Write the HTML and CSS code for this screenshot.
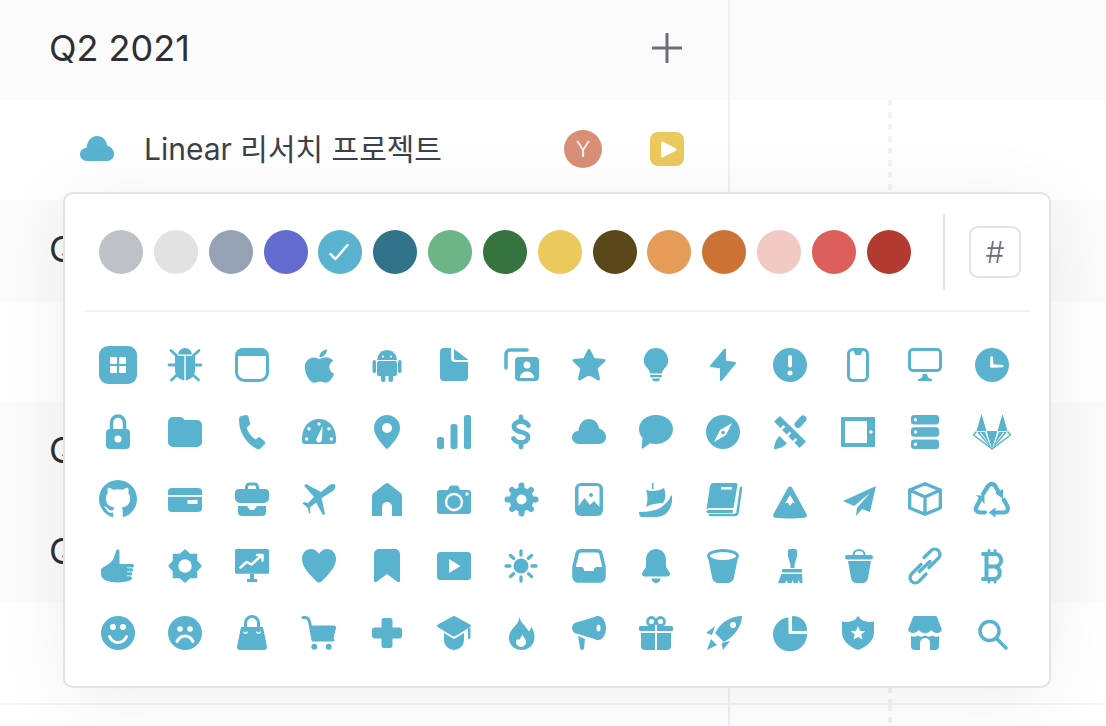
FILE: index.html
```html
<!DOCTYPE html>
<html lang="ko">
<head>
    <meta charset="UTF-8">
    <meta name="viewport" content="width=device-width, initial-scale=1.0">
    <title>Linear</title>
    <link rel="stylesheet" href="styles.css">
</head>
<body>
    <div class="board">
        <div class="band">
            <div class="band-main"><h2 class="quarter">Q2 2021</h2>
                <svg class="add" viewBox="0 0 30 30"><path d="M15 1v28M1 15h28"/></svg>
            </div>
            <div class="band-side"></div>
        </div>
        <div class="project">
            <div class="project-main">
                <svg class="ic" viewBox="0 0 34 34"><path d="M7 29C3 29 0 26 0 22.5 0 18.5 3 16 6.5 16 7 9 11 4 17 4c5.500 0 9.500 4 10 9.500 4 1 7 4.500 7 8.500 0 4-3 7-7 7z"/></svg>
                <span class="project-name">Linear 리서치 프로젝트</span>
                <span class="avatar">Y</span>
                <span class="status"><svg viewBox="0 0 34 34"><path d="M12.500 11 25 17.500 12.500 24z"/></svg></span>
            </div>
            <div class="project-side"><div class="today"></div></div>
        </div>
        <div class="band band-wide">
            <div class="band-main"><h2 class="quarter">Q3 2021</h2></div>
            <div class="band-side"></div>
        </div>
        <div class="project">
            <div class="project-main"></div>
            <div class="project-side"><div class="today"></div></div>
        </div>
        <div class="band">
            <div class="band-main"><h2 class="quarter">Q4 2021</h2></div>
            <div class="band-side"></div>
        </div>
        <div class="band band-tall">
            <div class="band-main"><h2 class="quarter">Q1 2022</h2></div>
            <div class="band-side"></div>
        </div>
        <div class="project project-ruled">
            <div class="project-main"></div>
            <div class="project-side"><div class="today"></div></div>
        </div>
        <div class="project project-last">
            <div class="project-main"></div>
            <div class="project-side"><div class="today"></div></div>
        </div>
    </div>

    <div class="picker">
        <div class="picker-head">
            <div class="swatches">
                <span class="swatch c1"></span>
                <span class="swatch c2"></span>
                <span class="swatch c3"></span>
                <span class="swatch c4"></span>
                <span class="swatch c5"><svg viewBox="0 0 44 44"><path d="M12.500 24l5 5 12-14"/></svg></span>
                <span class="swatch c6"></span>
                <span class="swatch c7"></span>
                <span class="swatch c8"></span>
                <span class="swatch c9"></span>
                <span class="swatch c10"></span>
                <span class="swatch c11"></span>
                <span class="swatch c12"></span>
                <span class="swatch c13"></span>
                <span class="swatch c14"></span>
                <span class="swatch c15"></span>
            </div>
            <div class="picker-sep"></div>
            <button class="hash">#</button>
        </div>
        <div class="icons">
            <!-- row 1 -->
            <svg class="ic ic-lg" viewBox="0 0 38 38"><rect width="38" height="38" rx="9"/><rect class="w" x="11" y="11" width="7" height="7" rx="1"/><rect class="w" x="20" y="11" width="7" height="7" rx="1"/><rect class="w" x="11" y="20" width="7" height="7" rx="1"/><rect class="w" x="20" y="20" width="7" height="7" rx="1"/></svg>
            <svg class="ic" viewBox="0 0 34 34"><path d="M10 6.500a7 6.500 0 0 1 14 0z"/><path d="M7 8H16.300V32.500C11 31.500 7 28 7 22zM27 8H17.700V32.500C23 31.500 27 28 27 22z"/><path class="s" stroke-width="2.800" d="M3 2.500l6 5.500M31 2.500l-6 5.500M1 17h8M33 17h-8M3.500 32l6-5.500M30.500 32l-6-5.500"/></svg>
            <svg class="ic" viewBox="0 0 34 34"><rect class="s" stroke-width="3" x="1.500" y="1.500" width="31" height="31" rx="8"/><path d="M8 0h18a8 8 0 0 1 8 8H0a8 8 0 0 1 8-8z"/></svg>
            <svg class="ic" viewBox="0 0 34 34"><g transform="translate(2.500 -1) scale(.078 .0745)"><path d="M318.700 268.700c-.2-36.700 16.400-64.400 50-84.800-18.800-26.900-47.200-41.700-84.700-44.600-35.500-2.800-74.300 20.700-88.500 20.700-15 0-49.400-19.700-76.400-19.700C63.300 141.200 4 184.800 4 273.500q0 39.300 14.400 81.200c12.800 36.700 59 126.700 107.200 125.200 25.200-.6 43-17.900 75.800-17.900 31.800 0 48.300 17.900 76.400 17.900 48.600-.7 90.400-82.500 102.600-119.300-65.200-30.700-61.700-90-61.700-91.900zm-56.600-164.200c27.300-32.400 24.800-61.900 24-72.500-24.100 1.400-52 16.400-67.900 34.900-17.500 19.800-27.800 44.300-25.600 71.900 26.100 2 49.900-11.400 69.500-34.300z"/></g></svg>
            <svg class="ic" viewBox="0 0 34 34"><path d="M7 12a10 10 0 0 1 20 0z"/><rect x="7" y="13" width="20" height="15" rx="2"/><rect x="2.500" y="12" width="3.500" height="13" rx="1.700"/><rect x="28" y="12" width="3.500" height="13" rx="1.700"/><rect x="11" y="26" width="4.500" height="8" rx="2"/><rect x="18.500" y="26" width="4.500" height="8" rx="2"/><path class="s" stroke-width="1" d="M11 3.500l1.500 3M23 3.500l-1.500 3"/><circle class="w" cx="13" cy="8.500" r="1"/><circle class="w" cx="21" cy="8.500" r="1"/></svg>
            <svg class="ic" viewBox="0 0 34 34"><path d="M7 0h7v10a4 4 0 0 0 4 4h13v15a4 4 0 0 1-4 4H7a4 4 0 0 1-4-4V4a4 4 0 0 1 4-4z"/><path d="M17 1l14 10.500V12H19a2 2 0 0 1-2-2z"/></svg>
            <svg class="ic" viewBox="0 0 34 34"><path class="s" stroke-width="3.500" d="M23 2H6a4 4 0 0 0-4 4v14"/><rect x="11" y="9" width="24" height="24" rx="4"/><circle class="w" cx="23" cy="17" r="3.500"/><path class="w" d="M16 30c0-4 3-6.500 7-6.500s7 2.500 7 6.500z"/></svg>
            <svg class="ic" viewBox="0 0 34 34"><path class="st" stroke-width="3" d="M17 2.500l4.500 9 10.500 1-8 7.500 2.500 11-9.500-5.500-9.500 5.500 2.500-11-8-7.500 10.500-1z"/></svg>
            <svg class="ic" viewBox="0 0 34 34"><path d="M17 0a12 12 0 0 1 8 21c-1.500 1.500-2 3-2 4.500H11c0-1.500-.5-3-2-4.500A12 12 0 0 1 17 0z"/><rect x="11" y="27" width="12" height="2.300" rx="1"/><path d="M13 30.500h8a4 3 0 0 1-8 0z"/></svg>
            <svg class="ic" viewBox="0 0 34 34"><path class="st" stroke-width="2" d="M19 1.500 5 18l10 1.500V32l14-17-10-1.500z"/></svg>
            <svg class="ic" viewBox="0 0 34 34"><circle cx="17" cy="17" r="17"/><rect class="w" x="15" y="7" width="4" height="12.500" rx="2"/><circle class="w" cx="17" cy="25" r="2.500"/></svg>
            <svg class="ic" viewBox="0 0 34 34"><rect class="s" stroke-width="3" x="7.500" y="1.500" width="19" height="31" rx="4.500"/><path d="M12.500 2h9l-1 3.500a2 2 0 0 1-2 1.500h-3a2 2 0 0 1-2-1.500z"/></svg>
            <svg class="ic" viewBox="0 0 34 34"><rect class="s" stroke-width="3" x="1.500" y="1.500" width="31" height="21" rx="3.500"/><path d="M15 26h4l1 3.500 4 2V33H10v-1.500l4-2z"/></svg>
            <svg class="ic" viewBox="0 0 34 34"><circle cx="17" cy="17" r="17"/><path class="w" d="M15.300 9.500a1.300 1.300 0 0 1 2.600 0l.6 6.700 9 .8a1.100 1.100 0 0 1 0 2.200l-10.700.6a1.700 1.700 0 0 1-1.800-1.800z"/></svg>

            <!-- row 2 -->
            <svg class="ic" viewBox="0 0 34 34"><path class="s" stroke-width="3.500" d="M10.500 15V7.500a6.500 6.500 0 0 1 13 0V15"/><rect x="5" y="14" width="24" height="20" rx="4"/><circle class="w" cx="17" cy="24" r="3.500"/></svg>
            <svg class="ic" viewBox="0 0 34 34"><path d="M5 2h7c2.500 0 3.500 1.500 4.500 3H29a5 5 0 0 1 5 5v17a5 5 0 0 1-5 5H5a5 5 0 0 1-5-5V7a5 5 0 0 1 5-5z"/></svg>
            <svg class="ic" viewBox="0 0 34 34"><path d="M6 1l5-1c1.500 0 2 .8 2.500 2L15 8c.3 1.400-.3 2-1.500 3l-2 1.500c1.500 5 4.500 9 9 12l2-1.500c1-.8 2-1 3-.2l4 3.500c1 1 1 2 .2 3L26 33c-1.500 1.500-3 1.500-5 .5C11 28 4 17 4 5c0-2 .5-3.500 2-4z"/></svg>
            <svg class="ic" viewBox="0 0 34 34"><path d="M17 4C7 4 0 12 0 24v2a3 3 0 0 0 3 3h28a3 3 0 0 0 3-3v-2C34 12 27 4 17 4z"/><circle class="w" cx="4.700" cy="24" r="1.700"/><circle class="w" cx="7" cy="13.700" r="1.700"/><circle class="w" cx="17" cy="9" r="1.700"/><circle class="w" cx="27" cy="13.700" r="1.700"/><circle class="w" cx="29.300" cy="24" r="1.700"/><path class="w" d="M20.700 11l-.8 14.500a3 3 0 0 1-5.800-1z"/></svg>
            <svg class="ic" viewBox="0 0 34 34"><path d="M17 0a13 13 0 0 1 13 13c0 8-8 16-11.500 20a2 2 0 0 1-3 0C12 29 4 21 4 13A13 13 0 0 1 17 0z"/><circle class="w" cx="17" cy="13" r="5"/></svg>
            <svg class="ic" viewBox="0 0 34 34"><rect y="22" width="7" height="12" rx="2.500"/><rect x="13.500" y="9" width="7" height="25" rx="2.500"/><rect x="27" width="7" height="34" rx="2.500"/></svg>
            <svg class="ic" viewBox="0 0 34 34"><path class="s" stroke-width="4.800" d="M24.500 10.500C23 8 20.500 6.500 17 6.500c-4 0-7 2-7 5.300 0 3.200 3.200 4.400 7 5.200 3.800.8 7 2.200 7 5.300 0 3.200-3 5.200-7 5.200-3.500 0-6-1.500-7.500-4M17 2v4M17 28v4"/></svg>
            <svg class="ic" viewBox="0 0 34 34"><path d="M7 29C3 29 0 26 0 22.500 0 18.500 3 16 6.500 16 7 9 11 4 17 4c5.500 0 9.500 4 10 9.500 4 1 7 4.500 7 8.500 0 4-3 7-7 7z"/></svg>
            <svg class="ic" viewBox="0 0 34 34"><path d="M17 0c9.500 0 17 6 17 14s-7.500 15-17 15c-2 0-4-.3-6-.8L4 33.500c-.8.500-1.500 0-1.500-1L3.500 23C1 20 0 17.500 0 14 0 6 7.500 0 17 0z"/></svg>
            <svg class="ic" viewBox="0 0 34 34"><circle cx="17" cy="17" r="17"/><path class="w" d="M8 27l6-12 12-7-6 12z"/><circle cx="17" cy="17.500" r="1.800"/></svg>
            <svg class="ic" viewBox="0 0 34 34"><path class="s" stroke-width="7" d="M30 4l-5 5.500"/><path d="M1 34c0-5 2.500-10 5.500-13l7.500 7.500c-3 3-8 5.500-13 5.500z"/><path stroke="#fff" stroke-width="1.500" d="M0 6.500 7 0 34 26.500 26.500 34z"/><path class="w" d="M7 13.500l3.500-3.500 1.800 1.800-3.500 3.500zM13 20l3.500-3.500 1.800 1.800-3.500 3.500zM19 26.500l3.500-3.500 1.800 1.800-3.500 3.500z"/></svg>
            <svg class="ic" viewBox="0 0 34 34"><rect x="0" y="2" width="34" height="30" rx="1"/><rect class="w" x="4" y="6" width="22" height="22"/><circle class="w" cx="30" cy="17" r="1.700"/></svg>
            <svg class="ic" viewBox="0 0 34 34"><rect x="3" width="28" height="9.500" rx="3"/><rect x="3" y="12.300" width="28" height="9.500" rx="3"/><rect x="3" y="24.500" width="28" height="9.500" rx="3"/><circle class="w" cx="7.500" cy="4.800" r="1.700"/><circle class="w" cx="7.500" cy="17" r="1.700"/><circle class="w" cx="7.500" cy="29.300" r="1.700"/></svg>
            <svg class="ic" viewBox="0 0 34 34"><path d="M6.500 -1 1.500 16h10zM27.500 -1l-5 17h10z"/><path d="M11.500 16h11L17 34z"/><path d="M2 17h8L16.500 34zM32 17h-8L17.500 34z"/><path class="s" stroke-width="1.500" d="M1 17l-2.500 3L17 34 35.500 20 33 17"/><path class="w" d="M5 18l1-.7L15.500 31zM29 18l-1-.7L18.500 31z"/></svg>

            <!-- row 3 -->
            <svg class="ic ic-lg" viewBox="0 0 16 16"><path d="M8 0C3.580 0 0 3.580 0 8c0 3.540 2.290 6.530 5.470 7.590.4.070.55-.17.55-.38 0-.19-.01-.82-.01-1.490-2.010.37-2.530-.49-2.690-.94-.09-.23-.48-.94-.82-1.130-.28-.15-.68-.52-.01-.53.63-.01 1.080.58 1.230.82.72 1.210 1.870.87 2.330.66.070-.52.28-.87.51-1.070-1.780-.2-3.640-.89-3.640-3.950 0-.87.31-1.590.82-2.150-.08-.2-.36-1.020.08-2.120 0 0 .67-.21 2.200.82.64-.18 1.320-.27 2-.27.68 0 1.360.09 2 .27 1.530-1.040 2.200-.82 2.200-.82.44 1.100.16 1.920.08 2.120.51.56.82 1.270.82 2.150 0 3.070-1.870 3.750-3.650 3.950.29.25.54.73.54 1.480 0 1.070-.01 1.930-.01 2.200 0 .21.15.46.55.38A8.013 8.013 0 0 0 16 8c0-4.420-3.580-8-8-8z"/></svg>
            <svg class="ic" viewBox="0 0 34 34"><rect y="6" width="34" height="24" rx="4"/><rect class="w" y="13" width="34" height="1.800"/><rect class="w" x="19.500" y="18" width="10" height="4"/></svg>
            <svg class="ic" viewBox="0 0 34 34"><path class="s" stroke-width="3" d="M11.500 9V5a3 3 0 0 1 3-3h5a3 3 0 0 1 3 3v4"/><path d="M4 7h26a4 4 0 0 1 4 4v5a5 5 0 0 1-5 5H5a5 5 0 0 1-5-5v-5a4 4 0 0 1 4-4z"/><path d="M3 24h9l3 4h4l3-4h9v6a4 4 0 0 1-4 4H7a4 4 0 0 1-4-4z"/></svg>
            <svg class="ic" viewBox="0 0 34 34"><path d="M33 3c-1-1.500-4-1-6 .5L19 10 4 2 2 3.500 12 15l-6 6-4-1-1.500 1.500L6 26l1 6 1.500-1.500-.5-5 6-5L21 33l2-1-3.500-16L31 9c2-2 3-4.500 2-6z"/></svg>
            <svg class="ic" viewBox="0 0 34 34"><path d="M15.500 1.500a2.500 2.500 0 0 1 3 0L30 10.500a4 4 0 0 1 2 3.500v20H22v-9a5 5 0 0 0-10 0v9H2V14a4 4 0 0 1 2-3.500z"/></svg>
            <svg class="ic" viewBox="0 0 34 34"><path d="M3 8h8l1-2.500a3 3 0 0 1 2.500-2h5a3 3 0 0 1 2.500 2L23 8h8a3 3 0 0 1 3 3v18a3 3 0 0 1-3 3H3a3 3 0 0 1-3-3V11a3 3 0 0 1 3-3z"/><circle cx="17" cy="20" r="8" fill="none" stroke="#fff" stroke-width="2.400"/><circle class="w" cx="30" cy="12" r="1.700"/></svg>
            <svg class="ic" viewBox="0 0 34 34"><g class="s" stroke-width="6"><path d="M17.500 3.500v28M3.500 17.500h28M8 8l19 19M27 8 8 27"/></g><circle cx="17.500" cy="17.500" r="12"/><circle class="w" cx="17.500" cy="17.500" r="5"/></svg>
            <svg class="ic" viewBox="0 0 34 34"><rect x="3" y="1" width="28" height="33" rx="6"/><path class="w" d="M6.500 6a2 2 0 0 1 2-2h17a2 2 0 0 1 2 2v19L22 19l-4 4-5.500-7-6 8z"/><circle cx="19" cy="13" r="2"/></svg>
            <svg class="ic" viewBox="0 0 34 34"><path d="M7 8c6 2 13 1 18-2 2 5 2 11-1 15-5 0-12 1-17 4 2-6 2-12 0-17z"/><rect x="13" y="1" width="1.500" height="6"/><path d="M0 30c8 0 20-1 26-8 3-3 5-5 6-9l1 1c1 10-4 21-16 21H3c-2 0-3-2-3-5z"/></svg>
            <svg class="ic" viewBox="0 0 34 34"><path d="M7 1h23a1.500 1.500 0 0 1 1.500 1.700L27.500 26H5c-2 0-3.500.5-4.500 1.500L4 4a3.500 3.500 0 0 1 3-3z"/><rect class="w" x="15" y="5" width="11" height="2.500"/><path d="M.3 29.500c0-1 1.500-1.500 3-1.500H27l-.5 3H3c-1.500 0-2.700-.3-2.700-1.500z"/><path class="s" stroke-width="2.500" d="M35 6l-3.500 24.500a3 3 0 0 1-3 2.500H4"/></svg>
            <svg class="ic" viewBox="0 0 34 34"><path d="M17 4.500c1.500 0 2 1 2.500 2l14 25.500c1 2 0 3.500-2 3.700-9 1-20 1-29 0-2-.2-3-1.700-2-3.700l14-25.500c.5-1 1-2 2.500-2z"/><path class="w" d="M17 13l5 8.500-2.500-1L17 24l-2.500-3.500-2.500 1z"/></svg>
            <svg class="ic" viewBox="0 0 34 34"><path d="M35 4 2 19l11 5L29 11 16 26l-1 8 6-7 8 3z"/></svg>
            <svg class="ic" viewBox="0 0 34 34"><path class="s" stroke-width="3.300" d="M17 1.700 32.300 8v18L17 32.300 1.700 26V8zM1.700 8 17 15l15.300-7M17 15v17"/></svg>
            <svg class="ic" viewBox="0 0 34 34"><g class="s" stroke-width="4.200"><path d="M8 12l5.500-8.500q3.500-3 6.500 0L24 11"/><path d="M29 18l3.500 6.500q1.500 6-4 6H19"/><path d="M10 30.500H5q-6-1-3.500-6L5 18"/></g><path d="M20 11l8-4v10zM13.500 30.500l7-5v10zM1 13l8.500 1v8z"/></svg>

            <!-- row 4 -->
            <svg class="ic" viewBox="0 0 34 34"><path d="M15.500 1c1.500-1.500 3-.5 3 2v12H32a2 2 0 0 1 0 3.500h-6v.7h5a1.700 1.700 0 0 1 0 3.300h-5v.7h4a1.700 1.700 0 0 1 0 3.300h-4v.7h3a2 2 0 0 1 0 4C25 33 18 34 10 33 5 32 1 30 0 26v-6C3 17 11 15 13 8z"/></svg>
            <svg class="ic" viewBox="0 0 34 34"><path class="st" stroke-width="1.500" d="M17 1l5 4.500h6.500V12l4.500 5-4.500 5v6.500H22L17 33l-5-4.500H5.500V22L1 17l4.500-5V5.500H12z"/><circle class="w" cx="17" cy="17" r="6.700"/></svg>
            <svg class="ic" viewBox="0 0 34 34"><rect width="34" height="24.700" rx="1.500"/><path fill="none" stroke="#fff" stroke-width="2.500" stroke-linecap="round" stroke-linejoin="round" d="M5.500 18.500l6-5.500 5 2.500 9.500-8.500M22 6h5.500v5.500"/><path d="M15 25h4v5h3v3H12v-3h3z"/></svg>
            <svg class="ic" viewBox="0 0 34 34"><path d="M17 33.500c-1 0-2-.6-3-1.600C8 26 0 18 0 10 0 4 4 0 9 0c3.500 0 6.500 2 8 5 1.500-3 4.500-5 8-5 5 0 9 4 9 10 0 8-8 16-14 22-1 1-2 1.500-3 1.500z"/></svg>
            <svg class="ic" viewBox="0 0 34 34"><path d="M9 0h16a5 5 0 0 1 5 5v26.500c0 1.500-1.500 2.200-2.700 1.300L17 25 6.700 32.800C5.500 33.700 4 33 4 31.500V5a5 5 0 0 1 5-5z"/></svg>
            <svg class="ic" viewBox="0 0 34 34"><rect y="3" width="34" height="28" rx="3.500"/><path class="w" d="M12 10l11.500 7L12 24z"/></svg>
            <svg class="ic" viewBox="0 0 34 34"><circle cx="17" cy="17" r="7.500"/><path class="s" stroke-width="3.300" d="M17 2v4M17 28v4M2 17h4M28 17h4M6.500 6.500l3 2.800M27.500 6.500l-3 2.800M6.500 27.500l3-2.800M27.500 27.500l-3-2.800"/></svg>
            <svg class="ic" viewBox="0 0 34 34"><path class="s" stroke-width="3.500" d="M9 1.800h16c2 0 3.500 1 4 3l3 13V28a4 4 0 0 1-4 4H6a4 4 0 0 1-4-4V18L5 5c.5-2 2-3.200 4-3.200z"/><path d="M2 18h7a3 3 0 0 1 3 3v1h10v-1a3 3 0 0 1 3-3h7v11a4 4 0 0 1-4 4H6a4 4 0 0 1-4-4z"/></svg>
            <svg class="ic" viewBox="0 0 34 34"><path d="M17 0c6.500 0 10 5 10 11v6c0 3 4 5 4 8 0 1.500-1 2.500-2.500 2.500h-23C4 27.500 3 26.500 3 25c0-3 4-5 4-8v-6C7 5 10.500 0 17 0z"/><path d="M12.500 29.500h9a4.500 4.500 0 0 1-9 0z"/></svg>
            <svg class="ic" viewBox="0 0 34 34"><path d="M1.500 6h31L28 28c-.5 3.500-3 6-6.500 6h-9C9 34 6.500 31.500 6 28z"/><ellipse class="w" cx="17" cy="7" rx="14.500" ry="5.500" stroke="#59b3ce" stroke-width="2.800"/></svg>
            <svg class="ic" viewBox="0 0 34 34"><path d="M15 2a2 2 0 0 1 2-2h5a2 2 0 0 1 2 2v5l-2.500 9v3h-4v-3L15 7z"/><rect x="9" y="20" width="20" height="3.500" rx="1"/><path d="M8.500 25H29l.5 9h-2.500l-1.500-3-1 3h-4l-.5-3-1.500 3h-4l-.5-3-2 3H5z"/></svg>
            <svg class="ic" viewBox="0 0 34 34"><rect x="4" y="6" width="28" height="4.500" rx="2.200"/><path class="s" stroke-width="2" d="M12.500 6c0-3 2.500-5 5.500-5s5.500 2 5.500 5"/><path d="M7 12h23l-3 17c-.5 3-3 5-6 5h-5c-3 0-5.500-2-6-5z"/></svg>
            <svg class="ic" viewBox="0 0 34 34"><path class="s" stroke-width="3.300" d="M13 15.500 3.500 25a5.200 5.200 0 0 0 7.500 7.300L18 25M11.500 22.500l10.500-10M21 18.500 30.500 9A5.200 5.200 0 0 0 23 1.700L16 8.500"/></svg>
            <svg class="ic" viewBox="0 0 34 34"><path class="s" stroke-width="4" d="M8 5h12a6 6 0 0 1 0 12.500H11.500M20 17.500A6.500 6.500 0 0 1 20 30H8M11.500 5v25"/><path class="s" stroke-width="3" d="M14 1.500v3M20 1.500v3M14 30v3M20 30v3"/></svg>

            <!-- row 5 -->
            <svg class="ic" viewBox="0 0 34 34"><circle cx="17" cy="17" r="17"/><circle class="w" cx="12" cy="11" r="3"/><circle class="w" cx="22" cy="11" r="3"/><path fill="none" stroke="#fff" stroke-width="3" stroke-linecap="round" d="M8.500 20.500c2 4.500 5 6 8.500 6s6.500-1.500 8.500-6"/></svg>
            <svg class="ic" viewBox="0 0 34 34"><circle cx="17" cy="17" r="17"/><circle class="w" cx="12" cy="13" r="2.800"/><circle class="w" cx="22" cy="13" r="2.800"/><path fill="none" stroke="#fff" stroke-width="3" stroke-linecap="round" d="M9 25.500c2-4 5-5.500 8-5.500s6 1.500 8 5.500"/></svg>
            <svg class="ic" viewBox="0 0 34 34"><path class="s" stroke-width="3" d="M10.500 14V7a6.500 6.500 0 0 1 13 0v7"/><path d="M6 11h22l4 20a3 3 0 0 1-3 3H5a3 3 0 0 1-3-3z"/><path fill="none" stroke="#fff" stroke-width="1.300" d="M8.700 15.500a1.800 1.800 0 0 0 3.600 0M21.700 15.500a1.800 1.800 0 0 0 3.600 0"/></svg>
            <svg class="ic" viewBox="0 0 34 34"><path class="s" stroke-width="3" d="M1 1.500h2c3 0 4 2 4.500 4L11 24h20"/><path d="M7.500 9.500H32a2 2 0 0 1 2 2.500l-3 12.500H11z"/><circle cx="12.300" cy="30.700" r="3"/><circle cx="26.700" cy="30.700" r="3"/></svg>
            <svg class="ic" viewBox="0 0 34 34"><path d="M14 2h6a2.500 2.500 0 0 1 2.500 2.500v7H29a3 3 0 0 1 3 3v5a3 3 0 0 1-3 3h-6.500v7a2.500 2.500 0 0 1-2.500 2.500h-6a2.500 2.500 0 0 1-2.500-2.500v-7H5a3 3 0 0 1-3-3v-5a3 3 0 0 1 3-3h6.500v-7A2.500 2.500 0 0 1 14 2z"/></svg>
            <svg class="ic" viewBox="0 0 34 34"><path d="M15.500.5a3 3 0 0 1 3 0l14.500 8a1.500 1.500 0 0 1 0 2.800L18.500 20a3 3 0 0 1-3 0L1 11.300a1.500 1.500 0 0 1 0-2.800z"/><path d="M7 17l9 5.500a2 2 0 0 0 2 0L27 17v7a10 10 0 0 1-20 0z"/><rect x="31" y="12" width="2.500" height="11" rx="1"/></svg>
            <svg class="ic" viewBox="0 0 34 34"><path d="M15 0c1 6 5 8 8 13 1 1.500 2 2.500 2.500 2 .5-1 1-2 2-4 2 3 3 7 3 10 0 8-6 13-13 13S5 29 5 22c0-5 3-9 6-12 3-3 4.500-6 4-10z"/><path class="w" d="M18.500 18c0 3 3.500 4 3.500 8a5 5 0 0 1-10 0c0-1 .5-2 1-3 1 1 2 1 3 0 1-1.500 1.500-3 2.500-5z"/></svg>
            <svg class="ic" viewBox="0 0 34 34"><path d="M26 0 6 6a6 6 0 0 0 0 12l20 6z"/><path d="M6 20l7 3-1 9a2 2 0 0 1-4 0z"/><ellipse cx="26" cy="12" rx="8" ry="12"/><ellipse class="w" cx="26.500" cy="12" rx="2" ry="3.500"/></svg>
            <svg class="ic" viewBox="0 0 34 34"><circle class="s" stroke-width="2.800" cx="12.500" cy="5.500" r="4"/><circle class="s" stroke-width="2.800" cx="21.500" cy="5.500" r="4"/><rect y="10" width="34" height="5" rx="1.500"/><path d="M2 17h30v13a4 4 0 0 1-4 4H6a4 4 0 0 1-4-4z"/><rect class="w" x="16" y="10" width="2" height="24"/></svg>
            <svg class="ic" viewBox="0 0 34 34"><path d="M0 17l9-7-3 9zM24 25l-7 9 -1.500-7z"/><path d="M36 0c-9 0-17 4-23 11l-4 6 9 9 6-4c7-6 12-14 12-22z"/><circle class="w" cx="27" cy="9" r="3"/><path d="M1 34l4-11 6 6z"/></svg>
            <svg class="ic" viewBox="0 0 34 34"><path d="M14.500 1.500a1 1 0 0 1 1 1V17a1 1 0 0 0 1 1H33a1 1 0 0 1 1 1A17 17 0 1 1 14.500 1.500z"/><path d="M19 1a1 1 0 0 1 1-1 14 14 0 0 1 14 14 1 1 0 0 1-1 1H20a1 1 0 0 1-1-1z"/></svg>
            <svg class="ic" viewBox="0 0 34 34"><path d="M17 0l3 3.500c3 2 8 3 13 2V16c0 8-6 14-16 18C7 30 1 24 1 16V5.500c5 1 10 0 13-2z"/><path class="w" d="M17 10l2 4.800 5.200.4-4 3.400 1.300 5L17 20.900l-4.500 2.700 1.300-5-4-3.400 5.200-.4z"/></svg>
            <svg class="ic" viewBox="0 0 34 34"><path d="M7 0h20a2 2 0 0 1 2 1l5 13c-1 2-3 3-5 3s-4-1-6-3c-1 2-3 3-6 3s-5-1-6-3c-2 2-4 3-6 3s-4-1-5-3L5 1a2 2 0 0 1 2-1z"/><path d="M3 20c2 1 4 1 6.500-.5 2 1.500 5 1.500 7.500 0 2.500 1.500 5 1.500 7.500 0 2.500 1.500 4.500 1.500 6.500.5v10a4 4 0 0 1-4 4h-5v-7a5 5 0 0 0-10 0v7H7a4 4 0 0 1-4-4z"/></svg>
            <svg class="ic" viewBox="0 0 34 34"><circle class="s" stroke-width="3.500" cx="14.500" cy="15" r="9.500"/><path class="s" stroke-width="3.500" d="M21.500 22.500 31 32"/></svg>
        </div>
    </div>
</body>
</html>
```
FILE: styles.css
```css
html {
    height: 726px;
    overflow: hidden;
}

body {
    margin: 0;
    height: 726px;
    overflow: hidden;
    background: #fff;
    font-family: "Inter", "Noto Sans CJK KR", sans-serif;
    color: #2e2f36;
}

.band, .project {
    display: flex;
    height: 100px;
}

.band-tall {
    height: 101px;
}

.band-wide {
    height: 102px;
}

.band-main, .project-main {
    width: 728px;
    box-sizing: border-box;
    display: flex;
    align-items: center;
}

.band-main {
    padding: 0 46px 4px 49px;
    justify-content: space-between;
}

.band-side, .project-side {
    flex: 1;
    border-left: 2px solid #f1f1f5;
}

.band {
    background: #fbfbfc;
}

.project-main {
    padding: 0 44px 2px 80px;
}

.project-ruled {
    height: 102px;
    box-sizing: border-box;
    border-bottom: 2px solid #f4f4f6;
}

.project-last {
    height: 21px;
}

.project-side {
    padding-left: 158px;
}

.quarter {
    margin: 0;
    font-size: 36px;
    font-weight: 400;
    line-height: 42px;
}

.add {
    width: 30px;
    height: 30px;
    fill: none;
    stroke: #6b6f76;
    stroke-width: 3;
    stroke-linecap: round;
}

.project-name {
    margin-left: 30px;
    padding-bottom: 4px;
    font-size: 30px;
    color: #3c4149;
    flex: 1;
}

.avatar {
    width: 38px;
    height: 38px;
    border-radius: 50%;
    background: #d98f76;
    color: #fff;
    font-size: 22px;
    font-weight: 300;
    display: flex;
    align-items: center;
    justify-content: center;
}

.status {
    width: 34px;
    height: 34px;
    margin-left: 48px;
    border-radius: 8px;
    background: #ebc95d;
}

.status svg {
    display: block;
    fill: #fff;
    stroke: #fff;
    stroke-width: 3;
    stroke-linejoin: round;
}

.today {
    width: 4px;
    height: 100%;
    background: repeating-linear-gradient(to bottom, #f1f1f6 0, #f1f1f6 6px, transparent 6px, transparent 12px);
}

/* colour + icon picker */
.picker {
    position: absolute;
    left: 63px;
    top: 192px;
    width: 988px;
    height: 496px;
    box-sizing: border-box;
    background: #fff;
    border: 2px solid #e2e2e8;
    border-radius: 10px;
    box-shadow: 0 8px 70px rgba(0, 0, 0, 0.07);
}

.picker-head {
    display: flex;
    align-items: center;
    margin: 0 18px 0 20px;
    padding: 20px 0 20px 14px;
    border-bottom: 2px solid #f1f1f4;
}

.swatches {
    width: 812px;
    display: flex;
    justify-content: space-between;
}

.swatch {
    width: 44px;
    height: 44px;
    border-radius: 50%;
}

.swatch svg {
    display: block;
    fill: none;
    stroke: #fff;
    stroke-width: 2.500;
    stroke-linecap: round;
    stroke-linejoin: round;
}

.c1 { background: #bec2c8; }
.c2 { background: #e2e2e2; }
.c3 { background: #95a2b3; }
.c4 { background: #626bce; }
.c5 { background: #59b3ce; }
.c6 { background: #33738a; }
.c7 { background: #6bb586; }
.c8 { background: #36743f; }
.c9 { background: #ebc95d; }
.c10 { background: #59471a; }
.c11 { background: #e49c58; }
.c12 { background: #cb7234; }
.c13 { background: #f2c9c3; }
.c14 { background: #dc5f5c; }
.c15 { background: #b33a30; }

.picker-sep {
    width: 2px;
    height: 76px;
    margin-left: 32px;
    background: #e2e2e8;
}

.hash {
    width: 52px;
    height: 52px;
    margin-left: 24px;
    padding: 0;
    background: #fff;
    border: 2px solid #e2e2e8;
    border-radius: 9px;
    color: #6b6f76;
    font-family: "Inter", sans-serif;
    font-size: 30px;
    font-weight: 300;
}

.icons {
    width: 942px;
    margin: 19px 0 0 19px;
    display: grid;
    grid-template-columns: repeat(14, 1fr);
    grid-auto-rows: 67px;
    align-items: center;
    justify-items: center;
}

.ic {
    width: 34px;
    height: 34px;
    fill: #59b3ce;
    overflow: visible;
}

.ic-lg {
    width: 38px;
    height: 38px;
}

.project-main .ic {
    flex: none;
}

.w {
    fill: #fff;
}

.s {
    fill: none;
    stroke: #59b3ce;
    stroke-linecap: round;
    stroke-linejoin: round;
}

.st {
    stroke: #59b3ce;
    stroke-linejoin: round;
}
```
